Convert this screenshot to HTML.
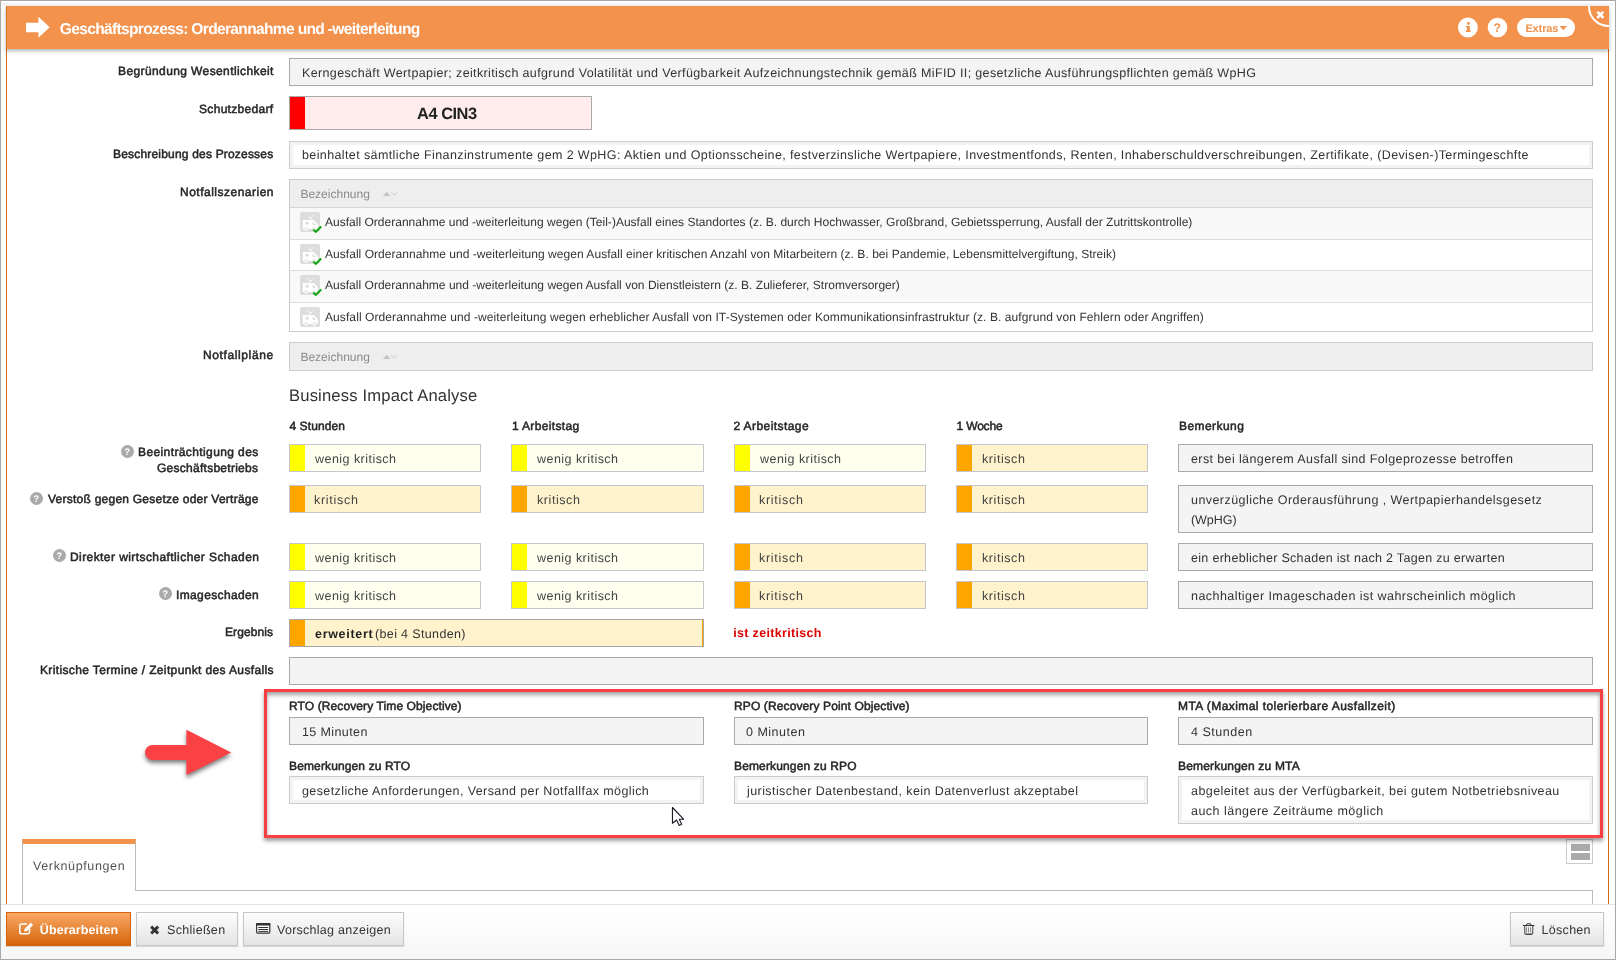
<!DOCTYPE html>
<html lang="de"><head><meta charset="utf-8"><title>Geschäftsprozess: Orderannahme und -weiterleitung</title>
<style>
html,body{margin:0;padding:0;}
body{width:1616px;height:960px;position:relative;overflow:hidden;background:#fff;font-family:"Liberation Sans",Arial,sans-serif;}
.a{position:absolute;box-sizing:border-box;}
.t{text-rendering:geometricPrecision;position:absolute;white-space:nowrap;line-height:20px;height:20px;font-family:"Liberation Sans",Arial,sans-serif;}
.ro{border:1px solid #a9a9a9;background:#f4f4f4;}
.ed{border:1px solid #ccc;background:#fff;box-shadow:inset 0 0 0 3px #f3f3f3;}
.sel{border:1px solid #c5c5cc;}
.sel i{position:absolute;left:0;top:0;bottom:0;width:15px;display:block;}
.y{background:#fffff0;} .y i{background:#ffff00;}
.o{background:#fff3cd;} .o i{background:#ffa500;}
.tbl{border:1px solid #ccc;background:#fff;}
.th{background:#eee;border-bottom:1px solid #d6d6d6;}
.tr{border-bottom:1px solid #ddd;}
.odd{background:#f9f9f9;}
.q{width:13px;height:13px;border-radius:50%;background:#aaa;}
.btn{border:1px solid #c6c6c6;background:linear-gradient(#fdfdfd,#e4e4e4);box-shadow:0 1px 1px rgba(0,0,0,.12);}
svg{position:absolute;overflow:visible;}
.tl{position:absolute;left:0;top:0;width:1616px;height:960px;will-change:transform;}

</style></head>
<body>
<!-- page frame -->
<div class="a" style="left:0;top:0;width:1616px;height:960px;border:1px solid #a8a8a8;"></div>
<div class="a" style="left:1px;top:3px;width:1613px;height:3px;background:#f6f6f6;"></div>
<!-- dialog side borders -->
<div class="a" style="left:6px;top:6px;width:1px;height:898px;background:#d2691e;"></div>
<div class="a" style="left:1608px;top:6px;width:1px;height:898px;background:#d2691e;"></div>

<!-- fields -->
<div class="a ro" style="left:289px;top:58px;width:1304px;height:28px;"></div>
<div class="a" style="left:289px;top:96px;width:303px;height:34px;border:1px solid #a9a9a9;background:#ffecec;"><div class="a" style="left:0;top:0;width:15px;height:32px;background:#ff0000;"></div></div>
<div class="a ed" style="left:289px;top:141px;width:1304px;height:28px;"></div>

<!-- table 1 -->
<div class="a tbl" style="left:289px;top:179px;width:1304px;height:153px;">
  <div class="a th" style="left:0;top:0;width:1302px;height:28px;"></div>
  <div class="a tr odd" style="left:0;top:28px;width:1302px;height:32px;"></div>
  <div class="a tr" style="left:0;top:60px;width:1302px;height:31px;"></div>
  <div class="a tr odd" style="left:0;top:91px;width:1302px;height:32px;"></div>
</div>
<!-- table 2 -->
<div class="a tbl" style="left:289px;top:342px;width:1304px;height:29px;background:#eee;"></div>

<!-- sort icons -->
<svg style="left:382px;top:190px;" width="18" height="8" viewBox="0 0 18 8"><path d="M0.9 6.1 L4.65 1.65 L8.4 6.1 Z" fill="#c4c4c4"/><path d="M9.1 1.9 L12.2 5.3 L15.4 1.9" fill="none" stroke="#cfcfcf" stroke-width="1"/></svg>
<svg style="left:382px;top:353px;" width="18" height="8" viewBox="0 0 18 8"><path d="M0.9 6.1 L4.65 1.65 L8.4 6.1 Z" fill="#c4c4c4"/><path d="M9.1 1.9 L12.2 5.3 L15.4 1.9" fill="none" stroke="#cfcfcf" stroke-width="1"/></svg>

<!-- row icons -->
<svg width="0" height="0" style="left:0;top:0;"><defs>
<g id="amb"><rect x="0" y="0" width="20" height="20" rx="2" fill="#dddddd"/>
<path d="M2.8 7.9 H13.5 L17.9 12.6 V16.9 H2.8 Z" fill="#fff"/>
<circle cx="6.3" cy="17.3" r="1.9" fill="#fff" stroke="#dddddd" stroke-width=".7"/><circle cx="14.4" cy="17.3" r="1.9" fill="#fff" stroke="#dddddd" stroke-width=".7"/>
<circle cx="6.3" cy="17.4" r=".6" fill="#e4e4e4"/><circle cx="14.4" cy="17.4" r=".6" fill="#e4e4e4"/>
<path d="M7.1 9.5 v3.6 M5.3 11.3 h3.6" stroke="#dddddd" stroke-width="1.5"/>
<path d="M12.7 9.6 V12.9 H16 Z" fill="#dddddd"/>
<circle cx="10.5" cy="6.1" r="1.05" fill="#fff"/>
<path d="M9.7 5.2 L6.8 3 M11.3 5.2 L14.3 2.4" stroke="#e9e9e9" stroke-width="1.3"/>
</g>
<path id="chk" d="M1.2 3.9 L3.8 6.4 L9.2 1" fill="none" stroke="#10a510" stroke-width="2.1"/>
</defs></svg>
<svg style="left:300px;top:212px;" width="24" height="24"><use href="#amb"/><use href="#chk" x="12" y="13.5"/></svg>
<svg style="left:300px;top:244px;" width="24" height="24"><use href="#amb"/><use href="#chk" x="12" y="13.5"/></svg>
<svg style="left:300px;top:275px;" width="24" height="24"><use href="#amb"/><use href="#chk" x="12" y="13.5"/></svg>
<svg style="left:300px;top:307px;" width="24" height="24"><use href="#amb"/></svg>

<!-- BIA help icons -->
<div class="a q" style="left:121px;top:444.75px;"></div>
<div class="a q" style="left:30px;top:491.75px;"></div>
<div class="a q" style="left:52.75px;top:549.25px;"></div>
<div class="a q" style="left:158.75px;top:587.25px;"></div>

<!-- BIA select boxes -->
<div class="a sel y" style="left:289px;top:444px;width:192px;height:28px;"><i></i></div>
<div class="a sel y" style="left:511px;top:444px;width:193px;height:28px;"><i></i></div>
<div class="a sel y" style="left:734px;top:444px;width:192px;height:28px;"><i></i></div>
<div class="a sel o" style="left:956px;top:444px;width:192px;height:28px;"><i></i></div>
<div class="a ro"    style="left:1178px;top:444px;width:415px;height:28px;"></div>

<div class="a sel o" style="left:289px;top:485px;width:192px;height:28px;"><i></i></div>
<div class="a sel o" style="left:511px;top:485px;width:193px;height:28px;"><i></i></div>
<div class="a sel o" style="left:734px;top:485px;width:192px;height:28px;"><i></i></div>
<div class="a sel o" style="left:956px;top:485px;width:192px;height:28px;"><i></i></div>
<div class="a ro"    style="left:1178px;top:485px;width:415px;height:48px;"></div>

<div class="a sel y" style="left:289px;top:543px;width:192px;height:28px;"><i></i></div>
<div class="a sel y" style="left:511px;top:543px;width:193px;height:28px;"><i></i></div>
<div class="a sel o" style="left:734px;top:543px;width:192px;height:28px;"><i></i></div>
<div class="a sel o" style="left:956px;top:543px;width:192px;height:28px;"><i></i></div>
<div class="a ro"    style="left:1178px;top:543px;width:415px;height:28px;"></div>

<div class="a sel y" style="left:289px;top:581px;width:192px;height:28px;"><i></i></div>
<div class="a sel y" style="left:511px;top:581px;width:193px;height:28px;"><i></i></div>
<div class="a sel o" style="left:734px;top:581px;width:192px;height:28px;"><i></i></div>
<div class="a sel o" style="left:956px;top:581px;width:192px;height:28px;"><i></i></div>
<div class="a ro"    style="left:1178px;top:581px;width:415px;height:28px;"></div>

<!-- Ergebnis -->
<div class="a sel o" style="left:289px;top:619px;width:415px;height:28px;border-color:#a6a6a6;box-shadow:inset -1px 0 0 #ffa500;"><i></i></div>
<div class="a ro" style="left:289px;top:657px;width:1304px;height:28px;"></div>

<!-- toggle icon -->
<div class="a" style="left:1566px;top:839px;width:27px;height:25px;border:1px solid #ccc;background:#fff;">
  <div class="a" style="left:3.5px;top:3.5px;width:19px;height:7px;background:#aaa;"></div>
  <div class="a" style="left:3.5px;top:13.2px;width:19px;height:7px;background:#aaa;"></div>
</div>
<!-- red highlight box -->
<div class="a" style="left:264px;top:689px;width:1339px;height:149px;border:3px solid #fa3f43;box-shadow:0 3px 4px rgba(0,0,0,.38), inset 0 3px 4px rgba(0,0,0,.36);"></div>
<!-- red arrow -->
<svg style="left:135px;top:720px;filter:drop-shadow(0.5px 3px 2px rgba(0,0,0,.5));" width="110" height="65" viewBox="135 720 110 65"><path d="M152.5 745 H186.4 V729.8 L231.2 752.4 L186.4 774.9 V760 H152.5 A7.5 7.5 0 0 1 152.5 745 Z" fill="#fa4144"/></svg>

<div class="a ro" style="left:289px;top:717px;width:415px;height:28px;"></div>
<div class="a ro" style="left:734px;top:717px;width:414px;height:28px;"></div>
<div class="a ro" style="left:1178px;top:717px;width:415px;height:28px;"></div>
<div class="a ed" style="left:289px;top:776px;width:415px;height:28px;"></div>
<div class="a ed" style="left:734px;top:776px;width:414px;height:28px;"></div>
<div class="a ed" style="left:1178px;top:776px;width:415px;height:48px;"></div>

<!-- cursor -->
<svg style="left:668px;top:804px;" width="20" height="26" viewBox="668 804 20 26"><path d="M672.45 807.5 V823.2 L676.6 820 L679.2 825.4 L681.7 824.2 L679.3 819.2 H683.6 Z" fill="#fff" stroke="#1a1a24" stroke-width="1.1" stroke-linejoin="round"/></svg>


<!-- tab -->
<div class="a" style="left:22px;top:890px;width:1571px;height:15px;border:1px solid #bbb;border-bottom:0;"></div>
<div class="a" style="left:22px;top:839px;width:114px;height:52px;border:1px solid #bbb;border-top:5px solid #f3924d;border-bottom:0;background:#fff;"></div>

<!-- footer -->
<div class="a" style="left:1px;top:904px;width:1614px;height:55px;border-top:1px solid #e2e2e2;background:linear-gradient(#ffffff,#fdfdfd 30%,#f6f6f6);"></div>
<div class="a" style="left:6px;top:912px;width:125px;height:34px;border:1px solid #d4640a;background:linear-gradient(#faa965,#e98a3e 45%,#d5650a);box-shadow:0 1px 1px rgba(0,0,0,.15);"></div>
<div class="a btn" style="left:136px;top:912px;width:102px;height:34px;"></div>
<div class="a btn" style="left:243px;top:912px;width:161px;height:34px;"></div>
<div class="a btn" style="left:1510px;top:912px;width:94px;height:34px;"></div>
<!-- button icons -->
<svg style="left:18px;top:920px;" width="17" height="16" viewBox="0 0 17 16"><path d="M11.5 8.5 V12 a1.8 1.8 0 0 1 -1.8 1.8 H3.6 A1.8 1.8 0 0 1 1.8 12 V5.8 A1.8 1.8 0 0 1 3.6 4 H9" fill="none" stroke="#fff" stroke-width="1.6"/><path d="M6.5 8.9 L12.8 2.6 L15.1 4.9 L8.8 11.2 L6.1 11.6 Z" fill="#fff"/></svg>
<svg style="left:255px;top:921px;" width="17" height="14" viewBox="255 921 17 14"><rect x="256.6" y="923.5" width="13.2" height="9.6" rx="1" fill="#fdfdfd" stroke="#333" stroke-width="1.2"/><rect x="256" y="922.9" width="14.4" height="2.7" rx=".8" fill="#333"/><path d="M258.3 927.5 H268.2 M258.3 929.5 H268.2 M258.3 931.4 H268.2" stroke="#333" stroke-width="1"/></svg>
<svg style="left:1520px;top:920px;" width="18" height="18" viewBox="1520 920 18 18"><path d="M1523 925.5 H1534.4" stroke="#333" stroke-width="1.1"/><path d="M1526.3 925.4 L1527.2 923.7 H1530.4 L1531.3 925.4" fill="none" stroke="#333" stroke-width="1"/><path d="M1524.75 926 V933.1 a1.1 1.1 0 0 0 1.1 1.1 H1531.65 a1.1 1.1 0 0 0 1.1 -1.1 V926" fill="none" stroke="#484848" stroke-width="1.05"/><path d="M1525.6 934.2 H1531.9" stroke="#333" stroke-width="1"/><path d="M1526.5 927.4 V932.5 M1528.5 927.4 V932.5 M1530.5 927.4 V932.5" stroke="#8a8a8a" stroke-width="1"/></svg>

<!-- header -->
<div class="a" style="left:6px;top:6px;width:1603px;height:43px;background:#f3924d;box-shadow:0 2px 4px rgba(0,0,0,.3);overflow:hidden;">
  <div class="a" style="left:1582px;top:-20px;width:41px;height:41px;border-radius:50%;border:2px solid #fff;"></div>
</div>
<div class="a" style="left:6px;top:6px;width:1px;height:43px;background:#d9741f;"></div>
<svg style="left:26px;top:16px;" width="25" height="23" viewBox="26 16 25 23"><path d="M26 22.8 H38.4 V16.8 L49.7 27.3 L38.4 37.8 V32.2 H26 Z" fill="#fff"/></svg>
<svg style="left:1452px;top:12px;" width="60" height="30" viewBox="1452 12 60 30"><circle cx="1467.9" cy="27.45" r="9.95" fill="#fff"/><circle cx="1497.5" cy="27.45" r="9.8" fill="#fff"/><circle cx="1468.45" cy="23.5" r="1.45" fill="#f3924d"/><path d="M1465.9 25.9 H1469.8 V30.3 H1470.6 V31.9 H1465.9 V30.3 H1467 V27.5 H1465.9 Z" fill="#f3924d"/></svg>
<div class="a" style="left:1517px;top:18px;width:58px;height:19px;border-radius:10px;background:#fff;"></div>
<svg style="left:1559px;top:25px;" width="9" height="6" viewBox="0 0 9 6"><path d="M0.6 1 H8 L4.3 5.2 Z" fill="#f3924d"/></svg>

<!-- text layer -->
<div class="tl">
<span class="t" style="left:59.80px;top:20px;font-size:15.6px;color:#fff;font-weight:bold;letter-spacing:-0.685px;">Geschäftsprozess: Orderannahme und -weiterleitung</span>
<span class="t" style="left:1525.40px;top:19px;font-size:11px;color:#f3924d;font-weight:bold;letter-spacing:-0.120px;">Extras</span>
<span class="t" style="left:1493.60px;top:18px;font-size:12.4px;color:#f3924d;font-weight:bold;">?</span>
<span class="t" style="left:1595.40px;top:5px;font-size:11.5px;color:#fff;font-family:DejaVu Sans,sans-serif;">✖</span>
<span class="t" style="left:118.00px;top:61px;font-size:12px;color:#262626;letter-spacing:0.396px;-webkit-text-stroke:0.5px #262626;">Begründung Wesentlichkeit</span>
<span class="t" style="left:199.00px;top:99px;font-size:12px;color:#262626;letter-spacing:0.318px;-webkit-text-stroke:0.5px #262626;">Schutzbedarf</span>
<span class="t" style="left:113.00px;top:144px;font-size:12px;color:#262626;letter-spacing:0.190px;-webkit-text-stroke:0.5px #262626;">Beschreibung des Prozesses</span>
<span class="t" style="left:180.00px;top:182px;font-size:12px;color:#262626;letter-spacing:0.500px;-webkit-text-stroke:0.5px #262626;">Notfallszenarien</span>
<span class="t" style="left:203.00px;top:345px;font-size:12px;color:#262626;letter-spacing:0.614px;-webkit-text-stroke:0.5px #262626;">Notfallpläne</span>
<span class="t" style="left:225.00px;top:622px;font-size:12px;color:#262626;letter-spacing:0.107px;-webkit-text-stroke:0.5px #262626;">Ergebnis</span>
<span class="t" style="left:40.00px;top:660px;font-size:12px;color:#262626;letter-spacing:0.366px;-webkit-text-stroke:0.5px #262626;">Kritische Termine / Zeitpunkt des Ausfalls</span>
<span class="t" style="left:138.00px;top:442px;font-size:12px;color:#262626;letter-spacing:0.395px;-webkit-text-stroke:0.5px #262626;">Beeinträchtigung des</span>
<span class="t" style="left:157.00px;top:458px;font-size:12px;color:#262626;letter-spacing:0.266px;-webkit-text-stroke:0.5px #262626;">Geschäftsbetriebs</span>
<span class="t" style="left:48.00px;top:489px;font-size:12px;color:#262626;letter-spacing:0.243px;-webkit-text-stroke:0.5px #262626;">Verstoß gegen Gesetze oder Verträge</span>
<span class="t" style="left:70.00px;top:547px;font-size:12px;color:#262626;letter-spacing:0.422px;-webkit-text-stroke:0.5px #262626;">Direkter wirtschaftlicher Schaden</span>
<span class="t" style="left:176.00px;top:585px;font-size:12px;color:#262626;letter-spacing:0.364px;-webkit-text-stroke:0.5px #262626;">Imageschaden</span>
<span class="t" style="left:124.20px;top:443px;font-size:9.5px;color:#fff;font-weight:bold;">?</span>
<span class="t" style="left:33.20px;top:490px;font-size:9.5px;color:#fff;font-weight:bold;">?</span>
<span class="t" style="left:56.20px;top:547px;font-size:9.5px;color:#fff;font-weight:bold;">?</span>
<span class="t" style="left:162.20px;top:585px;font-size:9.5px;color:#fff;font-weight:bold;">?</span>
<span class="t" style="left:302.00px;top:63px;font-size:12.5px;color:#333;letter-spacing:0.362px;">Kerngeschäft Wertpapier; zeitkritisch aufgrund Volatilität und Verfügbarkeit Aufzeichnungstechnik gemäß MiFID II; gesetzliche Ausführungspflichten gemäß WpHG</span>
<span class="t" style="left:417.00px;top:104px;font-size:16.4px;color:#222;font-weight:bold;letter-spacing:-0.458px;">A4 CIN3</span>
<span class="t" style="left:302.00px;top:145px;font-size:12.5px;color:#333;letter-spacing:0.386px;">beinhaltet sämtliche Finanzinstrumente gem 2 WpHG: Aktien und Optionsscheine, festverzinsliche Wertpapiere, Investmentfonds, Renten, Inhaberschuldverschreibungen, Zertifikate, (Devisen-)Termingeschfte</span>
<span class="t" style="left:300.40px;top:184px;font-size:12px;color:#8a8a8a;letter-spacing:0.010px;">Bezeichnung</span>
<span class="t" style="left:300.40px;top:347px;font-size:12px;color:#8a8a8a;letter-spacing:0.010px;">Bezeichnung</span>
<span class="t" style="left:325.00px;top:212px;font-size:12px;color:#333;letter-spacing:0.014px;">Ausfall Orderannahme und -weiterleitung wegen (Teil-)Ausfall eines Standortes (z. B. durch Hochwasser, Großbrand, Gebietssperrung, Ausfall der Zutrittskontrolle)</span>
<span class="t" style="left:325.00px;top:244px;font-size:12px;color:#333;letter-spacing:0.041px;">Ausfall Orderannahme und -weiterleitung wegen Ausfall einer kritischen Anzahl von Mitarbeitern (z. B. bei Pandemie, Lebensmittelvergiftung, Streik)</span>
<span class="t" style="left:325.00px;top:275px;font-size:12px;color:#333;letter-spacing:0.024px;">Ausfall Orderannahme und -weiterleitung wegen Ausfall von Dienstleistern (z. B. Zulieferer, Stromversorger)</span>
<span class="t" style="left:325.00px;top:307px;font-size:12px;color:#333;letter-spacing:0.089px;">Ausfall Orderannahme und -weiterleitung wegen erheblicher Ausfall von IT-Systemen oder Kommunikationsinfrastruktur (z. B. aufgrund von Fehlern oder Angriffen)</span>
<span class="t" style="left:289.00px;top:386px;font-size:16.6px;color:#333;letter-spacing:0.170px;">Business Impact Analyse</span>
<span class="t" style="left:289.40px;top:416px;font-size:12px;color:#262626;letter-spacing:0.112px;-webkit-text-stroke:0.5px #262626;">4 Stunden</span>
<span class="t" style="left:512.00px;top:416px;font-size:12px;color:#262626;letter-spacing:0.341px;-webkit-text-stroke:0.5px #262626;">1 Arbeitstag</span>
<span class="t" style="left:733.40px;top:416px;font-size:12px;color:#262626;letter-spacing:0.429px;-webkit-text-stroke:0.5px #262626;">2 Arbeitstage</span>
<span class="t" style="left:956.60px;top:416px;font-size:12px;color:#262626;letter-spacing:-0.192px;-webkit-text-stroke:0.5px #262626;">1 Woche</span>
<span class="t" style="left:1179.00px;top:416px;font-size:12px;color:#262626;letter-spacing:0.438px;-webkit-text-stroke:0.5px #262626;">Bemerkung</span>
<span class="t" style="left:315.00px;top:449px;font-size:12.5px;color:#444;letter-spacing:0.462px;">wenig kritisch</span>
<span class="t" style="left:537.00px;top:449px;font-size:12.5px;color:#444;letter-spacing:0.462px;">wenig kritisch</span>
<span class="t" style="left:760.00px;top:449px;font-size:12.5px;color:#444;letter-spacing:0.462px;">wenig kritisch</span>
<span class="t" style="left:982.00px;top:449px;font-size:12.5px;color:#444;letter-spacing:0.571px;">kritisch</span>
<span class="t" style="left:314.00px;top:490px;font-size:12.5px;color:#444;letter-spacing:0.714px;">kritisch</span>
<span class="t" style="left:537.00px;top:490px;font-size:12.5px;color:#444;letter-spacing:0.571px;">kritisch</span>
<span class="t" style="left:759.00px;top:490px;font-size:12.5px;color:#444;letter-spacing:0.714px;">kritisch</span>
<span class="t" style="left:982.00px;top:490px;font-size:12.5px;color:#444;letter-spacing:0.571px;">kritisch</span>
<span class="t" style="left:315.00px;top:548px;font-size:12.5px;color:#444;letter-spacing:0.462px;">wenig kritisch</span>
<span class="t" style="left:537.00px;top:548px;font-size:12.5px;color:#444;letter-spacing:0.462px;">wenig kritisch</span>
<span class="t" style="left:759.00px;top:548px;font-size:12.5px;color:#444;letter-spacing:0.714px;">kritisch</span>
<span class="t" style="left:982.00px;top:548px;font-size:12.5px;color:#444;letter-spacing:0.571px;">kritisch</span>
<span class="t" style="left:315.00px;top:586px;font-size:12.5px;color:#444;letter-spacing:0.462px;">wenig kritisch</span>
<span class="t" style="left:537.00px;top:586px;font-size:12.5px;color:#444;letter-spacing:0.462px;">wenig kritisch</span>
<span class="t" style="left:759.00px;top:586px;font-size:12.5px;color:#444;letter-spacing:0.714px;">kritisch</span>
<span class="t" style="left:982.00px;top:586px;font-size:12.5px;color:#444;letter-spacing:0.571px;">kritisch</span>
<span class="t" style="left:1191.00px;top:449px;font-size:12.5px;color:#333;letter-spacing:0.387px;">erst bei längerem Ausfall sind Folgeprozesse betroffen</span>
<span class="t" style="left:1191.00px;top:490px;font-size:12.5px;color:#333;letter-spacing:0.440px;">unverzügliche Orderausführung , Wertpapierhandelsgesetz</span>
<span class="t" style="left:1191.00px;top:510px;font-size:12.5px;color:#333;letter-spacing:-0.050px;">(WpHG)</span>
<span class="t" style="left:1191.00px;top:548px;font-size:12.5px;color:#333;letter-spacing:0.309px;">ein erheblicher Schaden ist nach 2 Tagen zu erwarten</span>
<span class="t" style="left:1191.00px;top:586px;font-size:12.5px;color:#333;letter-spacing:0.451px;">nachhaltiger Imageschaden ist wahrscheinlich möglich</span>
<span class="t" style="left:315.00px;top:624px;font-size:12.5px;color:#222;font-weight:bold;letter-spacing:0.688px;">erweitert</span>
<span class="t" style="left:375.00px;top:624px;font-size:12.5px;color:#333;letter-spacing:0.357px;">(bei 4 Stunden)</span>
<span class="t" style="left:733.20px;top:623px;font-size:12.5px;color:#dd0000;font-weight:bold;letter-spacing:0.330px;">ist zeitkritisch</span>
<span class="t" style="left:289.00px;top:696px;font-size:12px;color:#262626;letter-spacing:0.107px;-webkit-text-stroke:0.5px #262626;">RTO (Recovery Time Objective)</span>
<span class="t" style="left:734.00px;top:696px;font-size:12px;color:#262626;letter-spacing:0.121px;-webkit-text-stroke:0.5px #262626;">RPO (Recovery Point Objective)</span>
<span class="t" style="left:1178.00px;top:696px;font-size:12px;color:#262626;letter-spacing:0.432px;-webkit-text-stroke:0.5px #262626;">MTA (Maximal tolerierbare Ausfallzeit)</span>
<span class="t" style="left:302.00px;top:722px;font-size:12.5px;color:#333;letter-spacing:0.389px;">15 Minuten</span>
<span class="t" style="left:746.00px;top:722px;font-size:12.5px;color:#333;letter-spacing:0.500px;">0 Minuten</span>
<span class="t" style="left:1191.00px;top:722px;font-size:12.5px;color:#333;letter-spacing:0.531px;">4 Stunden</span>
<span class="t" style="left:289.00px;top:756px;font-size:12px;color:#262626;letter-spacing:0.132px;-webkit-text-stroke:0.5px #262626;">Bemerkungen zu RTO</span>
<span class="t" style="left:734.00px;top:756px;font-size:12px;color:#262626;letter-spacing:0.147px;-webkit-text-stroke:0.5px #262626;">Bemerkungen zu RPO</span>
<span class="t" style="left:1178.00px;top:756px;font-size:12px;color:#262626;letter-spacing:0.191px;-webkit-text-stroke:0.5px #262626;">Bemerkungen zu MTA</span>
<span class="t" style="left:302.00px;top:781px;font-size:12.5px;color:#333;letter-spacing:0.397px;">gesetzliche Anforderungen, Versand per Notfallfax möglich</span>
<span class="t" style="left:747.00px;top:781px;font-size:12.5px;color:#333;letter-spacing:0.417px;">juristischer Datenbestand, kein Datenverlust akzeptabel</span>
<span class="t" style="left:1191.00px;top:781px;font-size:12.5px;color:#333;letter-spacing:0.429px;">abgeleitet aus der Verfügbarkeit, bei gutem Notbetriebsniveau</span>
<span class="t" style="left:1191.00px;top:801px;font-size:12.5px;color:#333;letter-spacing:0.474px;">auch längere Zeiträume möglich</span>
<span class="t" style="left:33.00px;top:856px;font-size:12.5px;color:#555;letter-spacing:0.625px;">Verknüpfungen</span>
<span class="t" style="left:39.80px;top:920px;font-size:12.5px;color:#fff;font-weight:bold;letter-spacing:0.118px;">Überarbeiten</span>
<span class="t" style="left:167.00px;top:920px;font-size:12.5px;color:#333;letter-spacing:0.312px;">Schließen</span>
<span class="t" style="left:277.00px;top:920px;font-size:12.5px;color:#333;letter-spacing:0.265px;">Vorschlag anzeigen</span>
<span class="t" style="left:1541.60px;top:920px;font-size:12.5px;color:#333;letter-spacing:0.283px;">Löschen</span>
<span class="t" style="left:149.00px;top:921px;font-size:13.5px;color:#333;font-family:DejaVu Sans,sans-serif;">✖</span>
</div>
</body></html>
